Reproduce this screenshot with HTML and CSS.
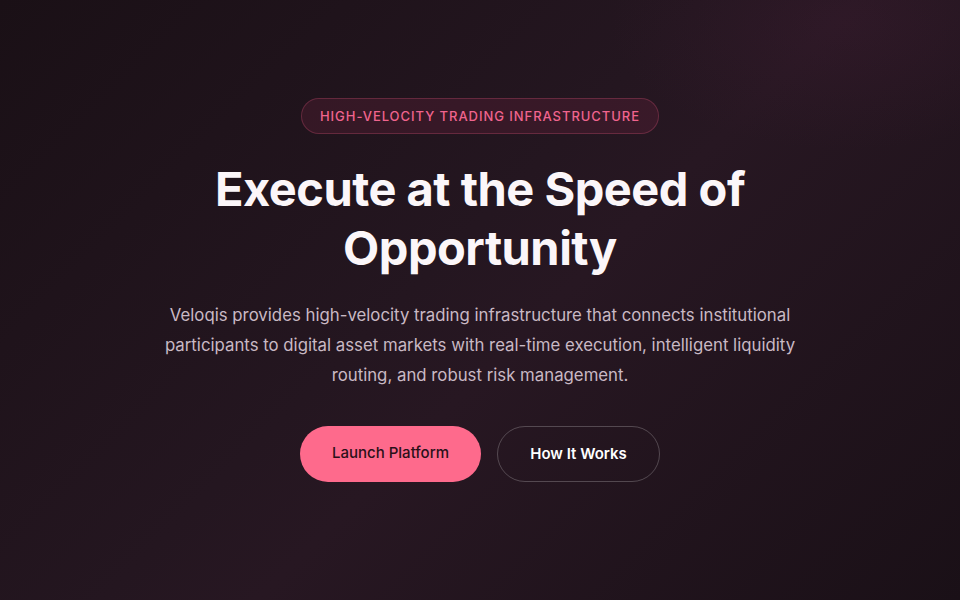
FILE: index.html
```html
<!DOCTYPE html>
<html lang="en">
<head>
<meta charset="utf-8">
<title>Veloqis</title>
<link rel="stylesheet" href="styles.css">
</head>
<body>
<main class="hero">
  <div class="hero-inner">
    <span class="badge">HIGH-VELOCITY TRADING INFRASTRUCTURE</span>
    <h1 class="title">Execute at the Speed of<br>Opportunity</h1>
    <p class="lead">Veloqis provides high-velocity trading infrastructure that connects institutional participants to digital asset markets with real-time execution, intelligent liquidity routing, and robust risk management.</p>
    <div class="actions">
      <a class="btn btn-primary" href="#">Launch Platform</a>
      <a class="btn btn-ghost" href="#">How It Works</a>
    </div>
  </div>
</main>
</body>
</html>
```

FILE: styles.css
```css
* { box-sizing: border-box; }
html, body { margin: 0; height: 100%; }
body {
  font-family: Inter, "Noto Sans", sans-serif;
  background: #1d1219;
  color: #fff;
}
.hero {
  height: 600px;
  background:
    radial-gradient(ellipse 35% 30% at 88% 4%, rgba(70, 30, 55, 0.25), transparent 70%),
    linear-gradient(135deg, #1a1016 0%, #241620 45%, #271722 55%, #1a1017 100%);
  display: flex;
  justify-content: center;
  padding-top: 98px;
}
.hero-inner {
  display: flex;
  flex-direction: column;
  align-items: center;
  text-align: center;
}
.badge {
  display: inline-block;
  height: 36px;
  line-height: 34px;
  padding: 0 18px;
  border-radius: 18px;
  border: 1px solid rgba(240, 90, 130, 0.25);
  background: rgba(140, 40, 75, 0.2);
  color: #f0648e;
  font-size: 13px;
  font-weight: 500;
  letter-spacing: 0.95px;
}
.title {
  margin: 25px 0 0;
  font-size: 47px;
  line-height: 59px;
  font-weight: 700;
  letter-spacing: -0.5px;
  color: #fbf6f9;
}
.lead {
  margin: 23px 0 0;
  width: 640px;
  font-size: 16.8px;
  line-height: 30px;
  color: #c9b9c4;
}
.actions {
  margin-top: 36px;
  display: flex;
  gap: 16px;
}
.btn {
  display: flex;
  align-items: center;
  justify-content: center;
  height: 56px;
  padding-bottom: 4px;
  border-radius: 28px;
  font-size: 15px;
  font-weight: 500;
  text-decoration: none;
}
.btn-primary {
  width: 181px;
  background: #fe6a8c;
  color: #2a1019;
}
.btn-ghost {
  width: 163px;
  padding-bottom: 2px;
  border: 1px solid rgba(255, 255, 255, 0.22);
  color: #fff;
  font-weight: 600;
}
```
